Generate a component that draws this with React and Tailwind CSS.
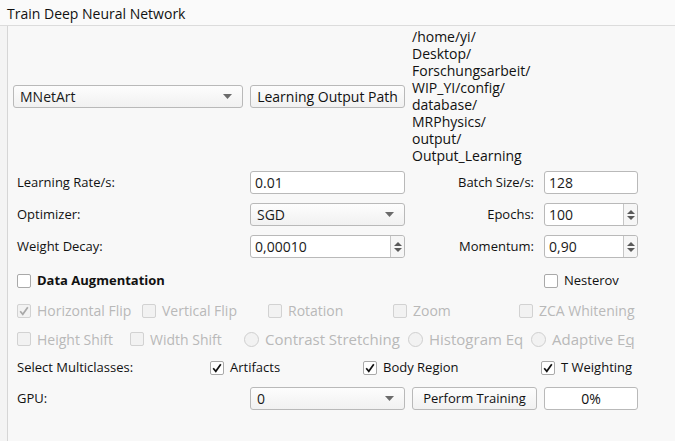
import React from 'react';

const font = { fontFamily: '"Open Sans", "Noto Sans", sans-serif' };

const Arrow = () => (
  <svg width="9" height="5" viewBox="0 0 9 5" className="shrink-0">
    <path d="M0 0 L9 0 L4.5 5 Z" fill="#6b6b6b" />
  </svg>
);

const Combo = ({ value }) => (
  <div className="flex items-center justify-between h-[23px] w-full rounded-[3px] border border-[#b9b9b9] bg-gradient-to-b from-[#fdfdfd] to-[#f1f1f1] pl-[6px] pr-[10px] text-[14px] text-[#1a1a1a]">
    <span>{value}</span>
    <Arrow />
  </div>
);

const Input = ({ value }) => (
  <div className="flex items-center h-[23px] w-full rounded-[3px] border border-[#b9b9b9] bg-white pl-[4px] text-[14px] text-[#1a1a1a]">
    {value}
  </div>
);

const Spin = ({ value }) => (
  <div className="flex items-stretch h-[23px] w-full rounded-[3px] border border-[#b9b9b9] bg-white text-[14px] text-[#1a1a1a]">
    <div className="flex-1 flex items-center pl-[4px]">{value}</div>
    <div className="w-[14px] border-l border-[#c6c6c6] bg-[#f6f6f6] rounded-r-[3px] flex flex-col items-center justify-center gap-[2px]">
      <svg width="8" height="4" viewBox="0 0 8 4"><path d="M0 4 L8 4 L4 0 Z" fill="#5a5a5a" /></svg>
      <svg width="8" height="4" viewBox="0 0 8 4"><path d="M0 0 L8 0 L4 4 Z" fill="#5a5a5a" /></svg>
    </div>
  </div>
);

const Check = ({ checked, disabled }) => (
  <div className={`w-[14px] h-[14px] rounded-[2px] border flex items-center justify-center shrink-0 ${disabled ? 'border-[#d2d2d2] bg-[#f2f2f2]' : 'border-[#a9a9a9] bg-white'}`}>
    {checked && (
      <svg width="10" height="10" viewBox="0 0 10 10">
        <path d="M1.2 5.2 L3.8 8.3 L8.8 1.2" fill="none" stroke={disabled ? '#a8a8a8' : '#111'} strokeWidth="1.7" />
      </svg>
    )}
  </div>
);

const Radio = () => (
  <div className="w-[15px] h-[15px] rounded-full border border-[#cfcfcf] bg-[#f2f2f2] shrink-0" />
);

const CheckItem = ({ label, checked, disabled, bold }) => (
  <div className="flex items-center gap-[6px]">
    <Check checked={checked} disabled={disabled} />
    <span className={`${disabled ? 'text-[#b9b9b9] text-[14px]' : 'text-[#111] text-[13px]'} ${bold ? 'font-bold' : ''}`}>{label}</span>
  </div>
);

const RadioItem = ({ label }) => (
  <div className="flex items-center gap-[6px]">
    <Radio />
    <span className="text-[#b9b9b9] text-[15px]">{label}</span>
  </div>
);

const Label = ({ children, right }) => (
  <div className={`text-[13px] text-[#111] ${right ? 'text-right pr-[3px]' : 'pl-[4px]'}`}>{children}</div>
);

const pathLines = ['/home/yi/', 'Desktop/', 'Forschungsarbeit/', 'WIP_YI/config/', 'database/', 'MRPhysics/', 'output/', 'Output_Learning'];

const cols = 'grid grid-cols-[230px_155px_125px_94px] gap-x-[7px] items-center';

export default function App() {
  return (
    <div style={font} className="w-[675px] h-[441px] overflow-hidden bg-[#f8f8f8] flex flex-col">
      <div className="h-[26px] shrink-0 bg-[#fafafa] pl-[7px] pt-[3px] text-[14px] text-[#111] border-b border-[#dcdcdc]">
        Train Deep Neural Network
      </div>
      <div className="flex-1 flex bg-[#f4f4f4]">
        <div className="w-[7px] shrink-0" />
        <div className="flex-1 border-l border-[#d6d6d6] bg-[#f8f8f8] pl-[5px]">
          <div className={`${cols} h-[138px] mt-[1px]`}>
            <Combo value="MNetArt" />
            <div className="h-[23px] rounded-[3px] border border-[#b9b9b9] bg-gradient-to-b from-[#fdfdfd] to-[#f1f1f1] flex items-center justify-center text-[14px] text-[#111] whitespace-nowrap">
              Learning Output Path
            </div>
            <div className="col-span-2 text-[14px] leading-[17px] text-[#111]">
              {pathLines.map((l) => (
                <div key={l}>{l}</div>
              ))}
            </div>
          </div>

          <div className={`${cols} h-[23px] mt-[6px]`}>
            <Label>Learning Rate/s:</Label>
            <Input value="0.01" />
            <Label right>Batch Size/s:</Label>
            <Input value="128" />
          </div>

          <div className={`${cols} h-[23px] mt-[9px]`}>
            <Label>Optimizer:</Label>
            <Combo value="SGD" />
            <Label right>Epochs:</Label>
            <Spin value="100" />
          </div>

          <div className={`${cols} h-[23px] mt-[9px]`}>
            <Label>Weight Decay:</Label>
            <Spin value="0,00010" />
            <Label right>Momentum:</Label>
            <Spin value="0,90" />
          </div>

          <div className={`${cols} h-[20px] mt-[13px]`}>
            <div className="col-span-3 pl-[4px]">
              <CheckItem label="Data Augmentation" bold />
            </div>
            <CheckItem label="Nesterov" />
          </div>

          <div className="grid grid-cols-[125px_126px_125px_126px_auto] items-center h-[20px] mt-[9px] pl-[4px]">
            <CheckItem label="Horizontal Flip" checked disabled />
            <CheckItem label="Vertical Flip" disabled />
            <CheckItem label="Rotation" disabled />
            <CheckItem label="Zoom" disabled />
            <CheckItem label="ZCA Whitening" disabled />
          </div>

          <div className="grid grid-cols-[113px_114px_164px_123px_auto] items-center h-[20px] mt-[8px] pl-[4px]">
            <CheckItem label="Height Shift" disabled />
            <CheckItem label="Width Shift" disabled />
            <RadioItem label="Contrast Stretching" />
            <RadioItem label="Histogram Eq" />
            <div className="flex items-center gap-[6px]">
              <Radio />
              <span className="text-[#b9b9b9] text-[15px]">Adaptive E<span className="underline">q</span></span>
            </div>
          </div>

          <div className="grid grid-cols-[197px_153px_178px_auto] items-center h-[20px] mt-[10px]">
            <Label>Select Multiclasses:</Label>
            <CheckItem label="Artifacts" checked />
            <CheckItem label="Body Region" checked />
            <CheckItem label="T Weighting" checked />
          </div>

          <div className={`${cols} h-[23px] mt-[9px]`}>
            <Label>GPU:</Label>
            <Combo value="0" />
            <div className="h-[23px] rounded-[3px] border border-[#b9b9b9] bg-gradient-to-b from-[#fdfdfd] to-[#f1f1f1] flex items-center justify-center text-[13px] text-[#111]">
              Perform Training
            </div>
            <div className="h-[23px] rounded-[3px] border border-[#b9b9b9] bg-white flex items-center justify-center text-[14px] text-[#111]">
              0%
            </div>
          </div>
        </div>
      </div>
    </div>
  );
}
